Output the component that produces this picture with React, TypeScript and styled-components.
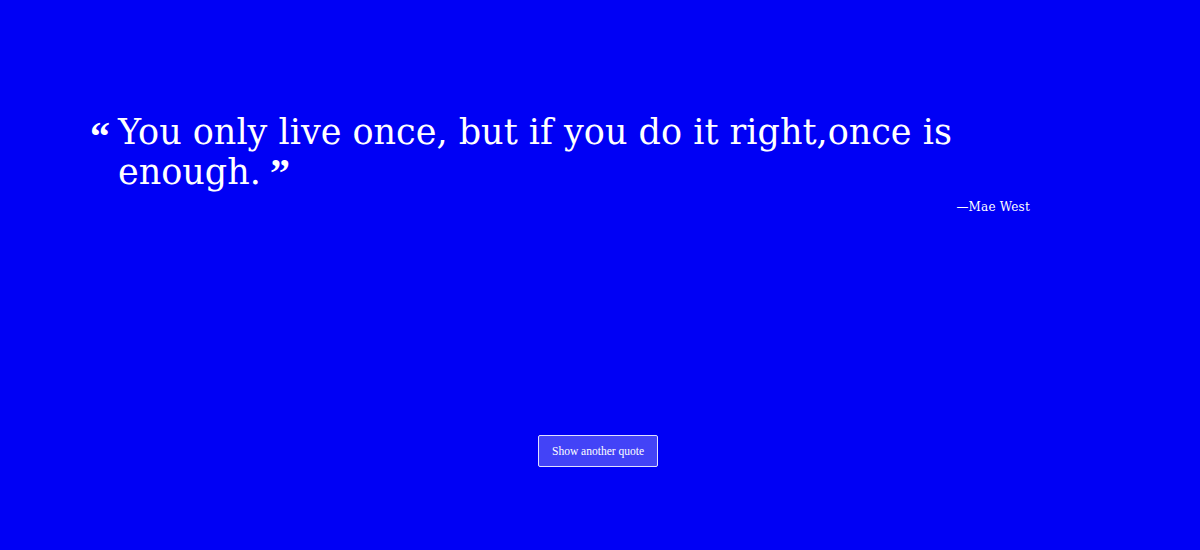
import * as React from "react";
import styled, { createGlobalStyle } from "styled-components";

const GlobalStyle = createGlobalStyle`
    html, body {
        margin: 0;
        padding: 0;
        background: #0000f5;
    }
    body {
        font-family: "DejaVu Serif", "Liberation Serif", serif;
        color: #ffffff;
    }
`;

const Page = styled.div`
    height: 550px;
    display: flex;
    flex-direction: column;
    background: #0000f5;
`;

const QuoteBox = styled.div`
    width: 940px;
    padding: 112px 0 0 90px;
    display: flex;
    flex-direction: column;
`;

const QuoteText = styled.blockquote`
    margin: 0;
    display: flex;
    align-items: flex-start;
    font-size: 35px;
    line-height: 40px;
`;

const OpenMark = styled.span`
    font-family: "Liberation Serif", serif;
    font-weight: bold;
    font-size: 40px;
    line-height: 40px;
    width: 28px;
    flex-shrink: 0;
    margin-top: 5px;
`;

const Words = styled.p`
    margin: 0;
    width: 860px;
`;

const CloseMark = styled.span`
    font-family: "Liberation Serif", serif;
    font-weight: bold;
    font-size: 40px;
    line-height: 30px;
    margin-left: 9px;
    vertical-align: -2px;
`;

const Author = styled.div`
    align-self: flex-end;
    font-size: 12px;
    letter-spacing: 0.2px;
    margin-top: 8px;
`;

const Footer = styled.div`
    display: flex;
    justify-content: center;
    padding: 221px 4px 0 0;
`;

const NextButton = styled.button`
    width: 120px;
    height: 32px;
    background: #4343f7;
    border: 1px solid #e0e0ff;
    border-radius: 2px;
    color: #ffffff;
    font-family: "Liberation Serif", "DejaVu Serif", serif;
    font-size: 11.5px;
    cursor: pointer;
`;

export default function App() {
    return (
        <Page>
            <GlobalStyle />
            <QuoteBox>
                <QuoteText>
                    <OpenMark>“</OpenMark>
                    <Words>
                        You only live once, but if you do it right,once is enough.
                        <CloseMark>”</CloseMark>
                    </Words>
                </QuoteText>
                <Author>—Mae West</Author>
            </QuoteBox>
            <Footer>
                <NextButton>Show another quote</NextButton>
            </Footer>
        </Page>
    );
}
